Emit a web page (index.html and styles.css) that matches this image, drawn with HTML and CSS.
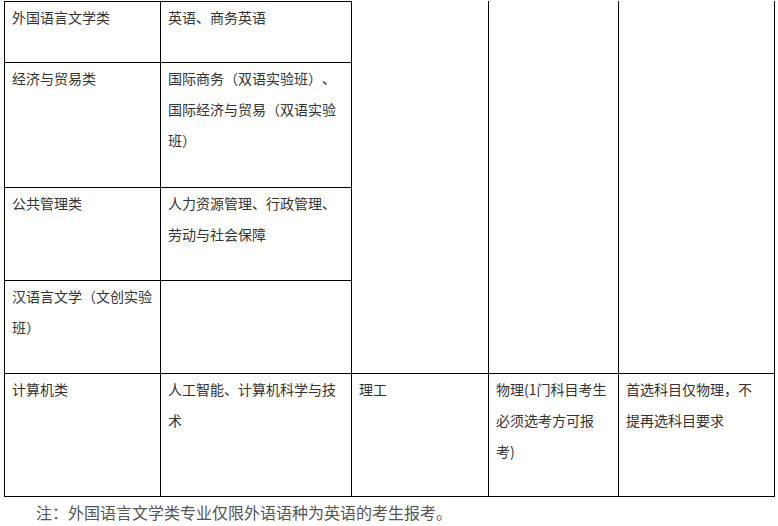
FILE: index.html
```html
<!DOCTYPE html>
<html lang="zh-CN">
<head>
<meta charset="utf-8">
<title>专业表</title>
<link rel="stylesheet" href="styles.css">
</head>
<body>
<div class="page">
  <table class="majors">
    <colgroup>
      <col class="c1"><col class="c2"><col class="c3"><col class="c4"><col class="c5">
    </colgroup>
    <tr class="r1">
      <td>外国语言文学类</td>
      <td>英语、商务英语</td>
      <td class="span top-open" rowspan="4"></td>
      <td class="span top-open" rowspan="4"></td>
      <td class="span top-open last" rowspan="4"></td>
    </tr>
    <tr class="r2">
      <td>经济与贸易类</td>
      <td>国际商务（双语实验班）、国际经济与贸易（双语实验班）</td>
    </tr>
    <tr class="r3">
      <td>公共管理类</td>
      <td>人力资源管理、行政管理、劳动与社会保障</td>
    </tr>
    <tr class="r4">
      <td>汉语言文学（文创实验班）</td>
      <td></td>
    </tr>
    <tr class="r5">
      <td>计算机类</td>
      <td>人工智能、计算机科学与技术</td>
      <td>理工</td>
      <td>物理(1门科目考生必须选考方可报考)</td>
      <td class="last">首选科目仅物理，不提再选科目要求</td>
    </tr>
  </table>
  <p class="note">注：外国语言文学类专业仅限外语语种为英语的考生报考。</p>
</div>
</body>
</html>
```
FILE: styles.css
```css
html, body {
  margin: 0;
  padding: 0;
  background: #fff;
}
body {
  font-family: "Noto Sans CJK SC", "Noto Sans", sans-serif;
  color: #333;
  text-spacing-trim: space-all;
}
.page {
  padding: 1px 0 0 4px;
}
.majors {
  border-collapse: collapse;
  table-layout: fixed;
  width: 770px;
  font-size: 14px;
  line-height: 31px;
}
.c1 { width: 156px; }
.c2 { width: 191px; }
.c3 { width: 137px; }
.c4 { width: 130px; }
.c5 { width: 156px; }
.majors td {
  border: 1px solid #000;
  vertical-align: top;
  padding: 0 7px;
  color: #333;
}
.majors td.last {
  padding-right: 9px;
}
.majors td.top-open {
  border-top-color: #fff;
}
.r1 { height: 61px; }
.r2 { height: 125px; }
.r3 { height: 93px; }
.r4 { height: 93px; }
.r5 { height: 123px; }
.note {
  margin: 0;
  font-size: 16px;
  line-height: 30px;
  text-indent: 2em;
  color: #555;
}
```
